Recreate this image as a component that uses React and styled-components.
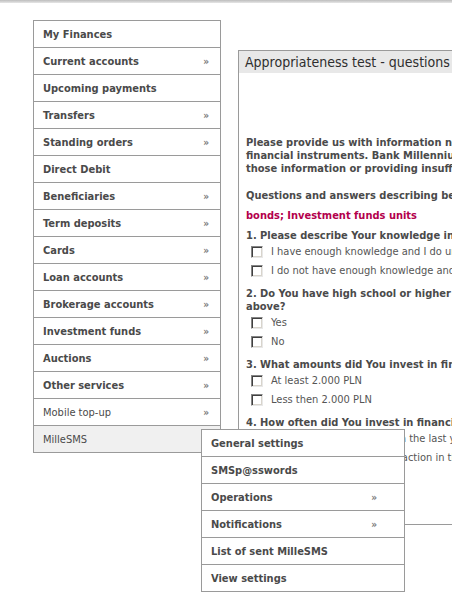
import React from "react";
import styled, { createGlobalStyle } from "styled-components";

const GlobalStyle = createGlobalStyle`
  html {
    overflow: hidden;
  }
  html, body {
    margin: 0;
    padding: 0;
    background: #fff;
  }
  body {
    font-family: "DejaVu Sans Condensed", "DejaVu Sans", Tahoma, sans-serif;
    font-size: 11px;
    color: #4a4a4a;
  }
`;

const TopLine = styled.div`
  height: 3px;
  background: linear-gradient(#bdbdbd, #e6e6e6);
`;

const Page = styled.div`
  display: flex;
  align-items: flex-start;
  padding: 17px 0 0 33px;
  width: 900px;
  min-height: 610px;
  box-sizing: border-box;
`;

const Sidebar = styled.ul`
  list-style: none;
  margin: 0;
  padding: 0;
  width: 186px;
  border: 1px solid #9a9a9a;
  border-bottom: none;
  flex: none;
`;

const Item = styled.li`
  position: relative;
  height: 26px;
  display: flex;
  align-items: center;
  justify-content: space-between;
  padding: 0 11px 0 9px;
  border-bottom: 1px solid #9a9a9a;
  background: ${(p) => (p.active ? "#f0f0f0" : "#fff")};
  font-weight: ${(p) => (p.light ? "normal" : "bold")};
  color: #4a4a4a;
  white-space: nowrap;
`;

const Arrow = styled.span`
  color: #7a7a7a;
  font-size: 10px;
  font-weight: bold;
`;

const Flyout = styled.ul`
  position: absolute;
  left: 167px;
  top: 3px;
  z-index: 2;
  list-style: none;
  margin: 0;
  padding: 0;
  width: 202px;
  border: 1px solid #9a9a9a;
  border-bottom: none;
  background: #fff;
`;

const FlyItem = styled(Item)`
  padding: 0 27px 0 9px;
  font-weight: bold;
  background: #fff;
`;

const Panel = styled.section`
  margin: 30px 0 0 17px;
  width: 560px;
  height: 473px;
  border: 1px solid #9a9a9a;
  flex: none;
`;

const PanelHeader = styled.h2`
  margin: 0;
  height: 22px;
  line-height: 22px;
  padding-left: 6px;
  background: #e8e8e8;
  font-weight: normal;
  font-size: 14px;
  color: #2e2e2e;
  white-space: nowrap;
`;

const PanelBody = styled.div`
  padding: 63px 0 0 7px;
  font-size: 11px;
  line-height: 13px;
  font-weight: bold;
  color: #4a4a4a;
  white-space: nowrap;
`;

const Intro = styled.p`
  margin: 0 0 14px;
`;

const Lead = styled.p`
  margin: 0 0 7px;
`;

const Category = styled.p`
  margin: 0;
  color: #b3004c;
`;

const Question = styled.div`
  margin-top: 7px;
`;

const Answer = styled.label`
  display: flex;
  align-items: center;
  height: 19px;
  padding-left: 5px;
  gap: 8px;
  font-weight: normal;
  font-size: 11px;
  color: #555;
`;

const Check = styled.span`
  width: 10px;
  height: 10px;
  flex: none;
  background: #fff;
  border: 1px solid;
  border-color: #858585 #e8e8e8 #e8e8e8 #858585;
  box-shadow: inset 1px 1px 0 #404040, inset -1px -1px 0 #d8d4cc;
`;

const menu = [
  ["My Finances", false],
  ["Current accounts", true],
  ["Upcoming payments", false],
  ["Transfers", true],
  ["Standing orders", true],
  ["Direct Debit", false],
  ["Beneficiaries", true],
  ["Term deposits", true],
  ["Cards", true],
  ["Loan accounts", true],
  ["Brokerage accounts", true],
  ["Investment funds", true],
  ["Auctions", true],
  ["Other services", true],
  ["Mobile top-up", true, true],
];

const sms = [
  ["General settings", false],
  ["SMSp@sswords", false],
  ["Operations", true],
  ["Notifications", true],
  ["List of sent MilleSMS", false],
  ["View settings", false],
];

const questions = [
  {
    q: ["1. Please describe Your knowledge in bonds and investment funds units"],
    a: [
      "I have enough knowledge and I do understand the risk",
      "I do not have enough knowledge and I do not understand the risk",
    ],
  },
  {
    q: [
      "2. Do You have high school or higher education in the field of economy or finance mentioned",
      "above?",
    ],
    a: ["Yes", "No"],
  },
  {
    q: ["3. What amounts did You invest in financial instruments mentioned above?"],
    a: ["At least 2.000 PLN", "Less then 2.000 PLN"],
  },
  {
    q: ["4. How often did You invest in financial instruments mentioned above?"],
    a: [
      "At least two transactions in the last year",
      "I have not made any transaction in the last year",
    ],
  },
];

export default function App() {
  return (
    <>
      <GlobalStyle />
      <TopLine />
      <Page>
        <Sidebar>
          {menu.map(([label, sub, light]) => (
            <Item key={label} light={light}>
              {label}
              {sub && <Arrow>»</Arrow>}
            </Item>
          ))}
          <Item active light>
            MilleSMS
            <Flyout>
              {sms.map(([label, sub]) => (
                <FlyItem key={label}>
                  {label}
                  {sub && <Arrow>»</Arrow>}
                </FlyItem>
              ))}
            </Flyout>
          </Item>
        </Sidebar>
        <Panel>
          <PanelHeader>Appropriateness test - questions and answers</PanelHeader>
          <PanelBody>
            <Intro>
              Please provide us with information necessary to assess your knowledge and experience in investing in
              <br />
              financial instruments. Bank Millennium will not be able to assess the appropriateness if You refuse to provide
              <br />
              those information or providing insufficient information.
            </Intro>
            <Lead>Questions and answers describing below concern following financial instruments:</Lead>
            <Category>bonds; Investment funds units</Category>
            {questions.map((item, i) => (
              <React.Fragment key={i}>
                <Question>
                  {item.q.map((line) => (
                    <div key={line}>{line}</div>
                  ))}
                </Question>
                {item.a.map((ans) => (
                  <Answer key={ans}>
                    <Check />
                    {ans}
                  </Answer>
                ))}
              </React.Fragment>
            ))}
          </PanelBody>
        </Panel>
      </Page>
    </>
  );
}
